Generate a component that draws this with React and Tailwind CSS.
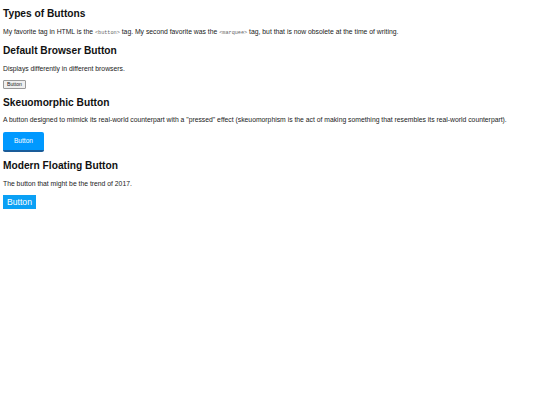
export default function App() {
  const body = { fontFamily: '"Liberation Sans", Arial, sans-serif' };
  const mono = { fontFamily: '"Liberation Mono", "Courier New", monospace' };
  return (
    <div className="w-[540px] h-[405px] bg-white text-[#111] pl-[3px] pt-[7px] flex flex-col items-start" style={body}>
      <h2 className="text-[10.2px] leading-[14px] font-bold">Types of Buttons</h2>
      <p className="text-[6.8px] leading-[8px] mt-[7px] text-[#222]">
        My favorite tag in HTML is the <code className="text-[5.2px] text-[#666]" style={mono}>&lt;button&gt;</code> tag. My second favorite was the <code className="text-[5.2px] text-[#666]" style={mono}>&lt;marquee&gt;</code> tag, but that is now obsolete at the time of writing.
      </p>
      <h2 className="text-[10.2px] leading-[14px] font-bold mt-[7px]">Default Browser Button</h2>
      <p className="text-[6.8px] leading-[8px] mt-[7px] text-[#222]">Displays differently in different browsers.</p>
      <button className="mt-[7px] h-[9px] w-[23px] bg-[#efefef] border border-[#999] rounded-[1px] text-[5.2px] leading-[7px] font-normal text-[#222] flex items-center justify-center">Button</button>
      <h2 className="text-[10.2px] leading-[14px] font-bold mt-[7px]">Skeuomorphic Button</h2>
      <p className="text-[6.8px] leading-[8px] mt-[6px] text-[#222]">A button designed to mimick its real-world counterpart with a "pressed" effect (skeuomorphism is the act of making something that resembles its real-world counterpart).</p>
      <button className="mt-[8px] h-[20px] w-[41px] bg-[#0099ff] border-b-2 border-[#1a5c99] rounded-[2px] text-[6.6px] font-normal text-white flex items-center justify-center">Button</button>
      <h2 className="text-[10.2px] leading-[14px] font-bold mt-[7px]">Modern Floating Button</h2>
      <p className="text-[6.8px] leading-[8px] mt-[7px] text-[#222]">The button that might be the trend of 2017.</p>
      <button className="mt-[7px] h-[14px] w-[33px] bg-[#0aa0f5] text-[8.6px] font-normal text-white flex items-center justify-center">Button</button>
    </div>
  );
}
